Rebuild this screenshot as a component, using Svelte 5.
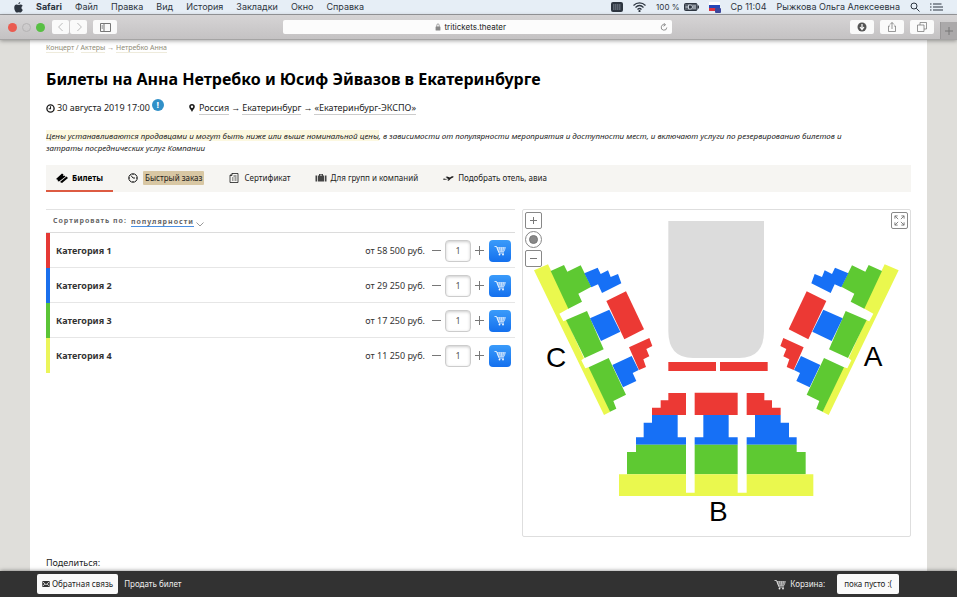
<!-- App.svelte -->
<script>
    const menus = ['Файл', 'Правка', 'Вид', 'История', 'Закладки', 'Окно', 'Справка'];

    const tabs = [
        { id: 'tickets', label: 'Билеты' },
        { id: 'quick', label: 'Быстрый заказ' },
        { id: 'gift', label: 'Сертификат' },
        { id: 'groups', label: 'Для групп и компаний' },
        { id: 'travel', label: 'Подобрать отель, авиа' }
    ];

    let activeTab = $state('tickets');
    let sort = $state('популярности');

    let categories = $state([
        { name: 'Категория 1', price: '58 500', color: 'red', count: 1 },
        { name: 'Категория 2', price: '29 250', color: 'blue', count: 1 },
        { name: 'Категория 3', price: '17 250', color: 'green', count: 1 },
        { name: 'Категория 4', price: '11 250', color: 'yellow', count: 1 }
    ]);

    // side block, drawn as C and mirrored for A
    const sideBlock = [
        ['yellow', '42,196 84,178 147,310 118,326 130,349 140,345 192,460 184,466 196,490 208,486 271,620 252,630'],
        ['green', '92,198 132,180 142,200 182,181 214,245 175,266 186,290 145,311'],
        ['blue', '193,205 233,188 242,207 264,196 272,216 294,207 304,235 246,264 234,238 214,247'],
        ['green', '138,345 201,318 251,433 194,459'],
        ['blue', '210,340 268,314 301,380 243,408'],
        ['red', '259,288 318,259 372,373 313,403'],
        ['red', '327,427 388,399 397,423 379,432 388,454 370,463 378,486 357,495'],
        ['blue', '277,480 335,453 356,495 338,504 349,528 309,547'],
        ['green', '206,487 266,459 318,569 280,588 289,611 270,620']
    ];

    // outer part of block B, mirrored for its right side
    const wingBlock = [
        ['red', '445,564 498,564 498,630 396,630 396,608 422,608 422,586 445,586'],
        ['blue', '396,630 473,630 473,697 498,697 498,719 348,719 348,697 371,697 371,653 396,653'],
        ['green', '348,719 498,719 498,808 321,808 321,741 348,741']
    ];

    const middleBlock = [
        ['red', '524,563 653,563 653,630 524,630'],
        ['blue', '550,630 626,630 626,697 653,697 653,719 524,719 524,697 550,697'],
        ['green', '524,719 653,719 653,808 524,808'],
        ['yellow', '297,808 498,808 498,863 524,863 524,808 653,808 653,863 680,863 680,808 880,808 880,873 297,873']
    ];

    function change(category, step) {
        category.count = Math.max(1, category.count + step);
    }
</script>

{#snippet cart()}
    <svg class="cart" viewBox="0 0 24 22" aria-hidden="true">
        <path d="M1 3h4l5 13h10" fill="none" stroke="currentColor" stroke-width="1.6" />
        <path d="M6 5h17l-3 8H9z M7 7.5h15 M8 10h13 M11 5l1.5 8 M15 5v8 M19 5l-1.500 8" fill="none" stroke="currentColor" stroke-width="1.1" />
        <circle cx="11" cy="19" r="1.8" fill="currentColor" />
        <circle cx="18" cy="19" r="1.8" fill="currentColor" />
    </svg>
{/snippet}

{#snippet shapes(list)}
    {#each list as [color, points]}
        <polygon class="seat-{color}" {points} />
    {/each}
{/snippet}

<div class="screen">
    <header class="menubar">
        <svg class="apple" viewBox="0 0 18 22" aria-hidden="true">
            <path d="M12.500 0c.2 2-1.500 4.500-3.800 4.600C8.400 2.500 10.500.300 12.500 0z M15 11.500c0-2 1-3.300 2.400-4.200C16.300 5.800 14.800 5.200 13.200 5.200c-1.700 0-2.700.9-4 .9-1.300 0-2.500-.9-4-.9C2.500 5.200.500 7.700.500 11.500c0 4.500 3 9.700 5.400 9.700 1.200 0 1.900-.8 3.500-.8s2.200.8 3.500.8c1.900 0 3.900-3.300 4.700-5.700-1.600-.7-2.600-2.200-2.600-4z" fill="currentColor" />
        </svg>
        <b>Safari</b>
        {#each menus as menu}
            <span>{menu}</span>
        {/each}
        <div class="status">
            <svg class="keys" viewBox="0 0 12 10" aria-hidden="true">
                <rect width="12" height="10" rx="2" fill="#2d3540" />
                <path d="M2 3h8M2 5h8M2 7h8" stroke="#8d97a3" stroke-width="1" stroke-dasharray="1.500 .5" />
            </svg>
            <svg class="wifi" viewBox="0 0 26 20" fill="none" stroke="currentColor" stroke-width="2.400" aria-hidden="true">
                <path d="M1 7c7-7 17-7 24 0M5 11c5-5 11-5 16 0M9 15c2.500-2.500 5.500-2.500 8 0" />
                <circle cx="13" cy="18" r="1" fill="currentColor" />
            </svg>
            <span class="percent">100 %</span>
            <svg class="battery" viewBox="0 0 30 16" aria-hidden="true">
                <rect x="1" y="1" width="25" height="14" rx="2" fill="#59616b" stroke="#2d3540" stroke-width="2" />
                <rect x="27" y="5" width="3" height="6" fill="#2d3540" />
                <path d="M3 8h6M9 4v8h4c5 0 5-8 0-8zM17 6h7M17 10h7" fill="#2d3540" stroke="#e6eef6" stroke-width="1.600" />
            </svg>
            <svg class="flag" viewBox="0 0 12 11" aria-hidden="true">
                <rect width="11" height="9" fill="#fff" />
                <rect y="3" width="11" height="3" fill="#2748b8" />
                <rect y="6" width="11" height="3" fill="#dc3340" />
                <rect x="6" y="6" width="6" height="5" rx="1" fill="#3d479c" />
            </svg>
            <span>Ср 11:04</span>
            <span>Рыжкова Ольга Алексеевна</span>
            <svg class="small" viewBox="0 0 20 20" fill="none" stroke="currentColor" stroke-width="2" aria-hidden="true">
                <circle cx="8" cy="8" r="6" /><path d="M12.500 12.500L19 19" />
            </svg>
            <svg class="list" viewBox="0 0 26 16" stroke="currentColor" stroke-width="2.400" aria-hidden="true">
                <path d="M0 2h3M0 8h3M0 14h3M6 2h17M6 8h20M6 14h20" />
            </svg>
        </div>
    </header>

    <div class="toolbar">
        <div class="lights"><i class="close"></i><i class="min"></i><i class="max"></i></div>
        <div class="pair">
            <button aria-label="Назад"><svg viewBox="0 0 10 10"><path d="M7 0L2 5l5 5" /></svg></button>
            <button aria-label="Вперёд"><svg viewBox="0 0 10 10"><path d="M3 0l5 5-5 5" /></svg></button>
        </div>
        <button class="tool side" aria-label="Боковое меню">
            <svg viewBox="0 0 11 9"><path d="M.5.5h10v8H.5zM4 .5v8M1.500 3h1.500M1.500 5h1.500" /></svg>
        </button>
        <div class="address">
            <svg class="lock" viewBox="0 0 10 12" aria-hidden="true">
                <rect x="1" y="5" width="8" height="7" rx="1" fill="#888" />
                <path d="M3 6V3c0-3 4-3 4 0v3" fill="none" stroke="#888" stroke-width="1.300" />
            </svg>
            <input aria-label="Адрес" value="tritickets.theater" />
            <button class="reload" aria-label="Обновить">
                <svg viewBox="0 0 20 22"><path d="M12 4a7 7 0 1 0 5 7M9 0l5 4-5 4" /></svg>
            </button>
        </div>
        <div class="tools">
            <button class="tool" aria-label="Загрузки">
                <svg viewBox="0 0 20 20"><circle cx="10" cy="10" r="9" fill="#555" stroke="none" /><path d="M10 4v9M6 10l4 5 4-5" stroke="#fff" stroke-width="2.400" /></svg>
            </button>
            <button class="tool" aria-label="Поделиться">
                <svg viewBox="0 0 20 20"><path d="M6 8H3v11h14V8h-3M10 14V1M6 5l4-4 4 4" stroke-width="1.500" /></svg>
            </button>
            <button class="tool" aria-label="Вкладки">
                <svg viewBox="0 0 20 20"><path d="M1 6h13v13H1zM6 6V1h13v13h-5" stroke-width="1.500" /></svg>
            </button>
            <button class="newtab" aria-label="Новая вкладка"><svg viewBox="0 0 10 10"><path d="M5 1v8M1 5h8" /></svg></button>
        </div>
    </div>

    <div class="viewport">
        <main>
            <nav class="crumbs">
                <a href="#concert">Концерт</a> / <a href="#actors">Актеры</a> → <a href="#netrebko">Нетребко Анна</a>
            </nav>
            <h1>Билеты на Анна Нетребко и Юсиф Эйвазов в Екатеринбурге</h1>

            <div class="info">
                <div class="date">
                    <svg class="icon" viewBox="0 0 20 20" fill="none" stroke="currentColor" stroke-width="3" aria-hidden="true">
                        <circle cx="10" cy="10" r="8" /><path d="M10 5v5.500H6" stroke-width="2.400" />
                    </svg>
                    <span>30 августа 2019 17:00</span>
                    <span class="badge">!</span>
                </div>
                <div class="place">
                    <svg class="pin" viewBox="0 0 14 20" aria-hidden="true">
                        <path d="M7 0a7 7 0 0 1 7 7c0 4-4 7-7 13C4 14 0 11 0 7a7 7 0 0 1 7-7zm0 4a3 3 0 1 0 0 6 3 3 0 0 0 0-6z" fill="currentColor" fill-rule="evenodd" />
                    </svg>
                    <a href="#russia">Россия</a> → <a href="#city">Екатеринбург</a> → <a href="#expo">«Екатеринбург-ЭКСПО»</a>
                </div>
            </div>

            <p class="note"><mark>Цены устанавливаются продавцами и могут быть ниже или выше номинальной цены</mark>, в зависимости от популярности мероприятия и доступности мест, и включают услуги по резервированию билетов и затраты посреднических услуг Компании</p>

            <nav class="tabs">
                {#each tabs as tab}
                    <a href="#{tab.id}" class={tab.id} class:active={activeTab === tab.id} onclick={() => (activeTab = tab.id)}>
                        {#if tab.id === 'tickets'}
                            <svg viewBox="0 0 24 20"><path d="M0 12L12 1l3 2-1 2 2 1 1-1 2 2L6 17l-3-1 1-2-2-1zM8 18L21 7l3 3-12 10z" fill="currentColor" /></svg>
                        {:else if tab.id === 'quick'}
                            <svg viewBox="0 0 20 20" fill="none" stroke="currentColor" stroke-width="2"><circle cx="10" cy="10" r="8.500" /><path d="M6 5l4 5h4M10 2v2M10 16v2M2 10h2M16 10h2" /></svg>
                        {:else if tab.id === 'gift'}
                            <svg viewBox="0 0 20 20" fill="none" stroke="currentColor" stroke-width="1.600"><path d="M6 1h12v18H2V5zM6 1v4H2M9 6h6M6 10h3M11 10h4M6 14h3M11 14h4" /></svg>
                        {:else if tab.id === 'groups'}
                            <svg viewBox="0 0 24 20" fill="#444"><path d="M1 5h3v12H1zM5.500 5H8V2h8v3h2.500v12h-13zM20 5h3v12h-3zM10 3.500V5h4V3.500z" fill-rule="evenodd" /></svg>
                        {:else}
                            <svg viewBox="0 0 24 20" fill="currentColor"><path d="M2 12l2-1 4 1 4-1-5-3 3-1 6 2c3-3 6-3 7-2s-2 3-5 4l-4 4-3 1 2-4-5 1c-3 1-5 1-6-1z" /></svg>
                        {/if}
                        <span>{tab.label}</span>
                    </a>
                {/each}
            </nav>

            <div class="columns">
                <section class="offers">
                    <div class="sort">
                        <label for="sort">Сортировать по:</label>
                        <select id="sort" bind:value={sort}>
                            <option>популярности</option>
                            <option>цене</option>
                        </select>
                        <svg viewBox="0 0 8 5" aria-hidden="true"><path d="M.5.5L4 4 7.500.5" fill="none" stroke="#999" /></svg>
                    </div>
                    {#each categories as category}
                        <div class="row {category.color}">
                            <b>{category.name}</b>
                            <span class="price">от {category.price} руб.</span>
                            <button class="step" aria-label="Меньше" onclick={() => change(category, -1)}>
                                <svg viewBox="0 0 9 9"><path d="M0 4.500h9" /></svg>
                            </button>
                            <input aria-label="Количество, {category.name}" bind:value={category.count} />
                            <button class="step" aria-label="Больше" onclick={() => change(category, 1)}>
                                <svg viewBox="0 0 9 9"><path d="M0 4.500h9M4.500 0v9" /></svg>
                            </button>
                            <button class="buy" aria-label="В корзину">{@render cart()}</button>
                        </div>
                    {/each}
                </section>

                <section class="map">
                    <svg class="hall" viewBox="9 15 1161 978">
                        <path d="M445 48h287v330q0 81-74 81H519q-74 0-74-81z" fill="#dcdcdc" />
                        <rect class="seat-red" x="445" y="471" width="143" height="27" />
                        <rect class="seat-red" x="600" y="471" width="143" height="27" />
                        {@render shapes(sideBlock)}
                        <g transform="translate(1178 0) scale(-1 1)">{@render shapes(sideBlock)}</g>
                        {@render shapes(wingBlock)}
                        <g transform="translate(1178 0) scale(-1 1)">{@render shapes(wingBlock)}</g>
                        {@render shapes(middleBlock)}
                        <text x="108" y="487">C</text>
                        <text x="1059" y="484">A</text>
                        <text x="595" y="948">B</text>
                    </svg>
                    <div class="zoom">
                        <button aria-label="Приблизить"><svg viewBox="0 0 9 9"><path d="M1 4.500h7M4.500 1v7" /></svg></button>
                        <button class="round" aria-label="Сбросить"><svg viewBox="0 0 9 9"><circle cx="4.500" cy="4.500" r="4" /></svg></button>
                        <button aria-label="Отдалить"><svg viewBox="0 0 9 9"><path d="M1 4.500h7" /></svg></button>
                    </div>
                    <button class="full" aria-label="На весь экран">
                        <svg viewBox="0 0 24 24"><path d="M9 9L2 2M2 8V2h6M15 9l7-7M16 2h6v6M9 15l-7 7M2 16v6h6M15 15l7 7M22 16v6h-6" /></svg>
                    </button>
                </section>
            </div>

            <div class="share">Поделиться:</div>
        </main>
    </div>

    <footer>
        <button class="light feedback">
            <svg class="mail" viewBox="0 0 20 16" aria-hidden="true">
                <rect width="20" height="16" fill="#333" /><path d="M1 2l9 8 9-8M1 14l6-6M19 14l-6-6" fill="none" stroke="#fff" stroke-width="2" />
            </svg>
            Обратная связь
        </button>
        <a href="#sell">Продать билет</a>
        <span class="basket">{@render cart()} Корзина:</span>
        <button class="light">пока пусто :(</button>
    </footer>
</div>

<style>
    :global(body) {
        margin: 0;
        background: #dfdeda;
    }

    .screen {
        min-height: 100vh;
        display: flex;
        flex-direction: column;
        font: 9px/12px "Noto Sans", sans-serif;
        color: #1c1c1c;
    }

    svg {
        display: block;
        flex: none;
    }

    button,
    input,
    select {
        font: inherit;
        color: inherit;
        margin: 0;
        padding: 0;
        border: 0;
        background: none;
        box-sizing: border-box;
    }

    button {
        display: flex;
        align-items: center;
        justify-content: center;
    }

    /* system menu */
    .menubar {
        display: flex;
        align-items: center;
        gap: 13px;
        height: 14px;
        padding: 0 14px;
        background: #e6eef6;
        border-bottom: 1px solid #9c9da1;
        font: 9px/14px Inter, sans-serif;
        color: #2d3540;
        white-space: nowrap;
    }

    .apple {
        width: 9px;
        height: 11px;
    }

    .status {
        display: flex;
        align-items: center;
        gap: 10px;
        margin-left: auto;
    }

    .keys {
        width: 12px;
        height: 10px;
    }

    .wifi {
        width: 13px;
        height: 10px;
    }

    .percent {
        font-size: 8px;
    }

    .battery {
        width: 15px;
        height: 8px;
        margin-left: -6px;
    }

    .flag {
        width: 12px;
        height: 11px;
    }

    .small {
        width: 10px;
        height: 10px;
    }

    .list {
        width: 13px;
        height: 8px;
    }

    /* browser toolbar */
    .toolbar {
        display: flex;
        align-items: center;
        height: 24px;
        padding-left: 8px;
        background: linear-gradient(#d6d4d5, #c4c2c3);
        border-bottom: 1px solid #a5a4a4;
        box-shadow: 0 1px 4px rgba(0, 0, 0, 0.35);
        position: relative;
        z-index: 1;
        font-family: Inter, sans-serif;
    }

    .toolbar svg {
        fill: none;
        stroke: #777;
    }

    .lights {
        display: flex;
        gap: 5px;
    }

    .lights i {
        width: 9px;
        height: 9px;
        border-radius: 50%;
        box-sizing: border-box;
    }

    .close {
        background: #ea5b50;
    }

    .min {
        border: 1px solid #b5b3b4;
    }

    .max {
        background: #57bf43;
    }

    .pair {
        display: flex;
        gap: 1px;
        margin: 0 6px 0 7px;
    }

    .pair button {
        width: 17px;
        height: 14px;
        background: #fafafa;
        border-radius: 2px;
    }

    .pair svg {
        width: 8px;
        height: 8px;
        stroke: #aaa;
    }

    .tool {
        width: 24px;
        height: 14px;
        background: #fafafa;
        border-radius: 2px;
    }

    .tool svg {
        width: 10px;
        height: 10px;
    }

    .side svg {
        width: 11px;
        height: 9px;
    }

    .address {
        display: flex;
        align-items: center;
        gap: 3px;
        width: 41%;
        height: 14px;
        margin: 0 12px 0 auto;
        padding: 0 4px;
        background: #fcfcfc;
        border-radius: 2px;
        box-sizing: border-box;
    }

    .lock {
        width: 6px;
        height: 8px;
        margin-left: auto;
    }

    .toolbar .lock {
        stroke: none;
    }

    .address input {
        width: 64px;
        height: 12px;
        font-size: 8px;
        color: #222;
    }

    .reload {
        margin-left: auto;
    }

    .reload svg {
        width: 8px;
        height: 9px;
        stroke-width: 2;
    }

    .tools {
        display: flex;
        align-items: center;
        gap: 6px;
        align-self: stretch;
        margin-left: auto;
    }

    .newtab {
        width: 17px;
        height: 17px;
        align-self: flex-end;
        background: #aba9aa;
        border-left: 1px solid #9a9899;
    }

    .newtab svg {
        width: 10px;
        height: 10px;
    }

    /* page */
    .viewport {
        flex: 1;
        display: flex;
        padding: 0 30px;
    }

    main {
        flex: 1;
        min-width: 0;
        padding: 2px 16px;
        background: #fff;
    }

    main a {
        color: inherit;
        text-decoration: none;
    }

    .crumbs {
        font-size: 7px;
        color: #8f8c78;
    }

    .crumbs a {
        border-bottom: 1px solid #eeebdc;
    }

    h1 {
        margin: 13px 0 9px;
        font: bold 16px/24px "Noto Sans", sans-serif;
        color: #000;
    }

    .info {
        display: flex;
        align-items: center;
        gap: 25px;
        height: 16px;
    }

    .date,
    .place {
        display: flex;
        align-items: center;
        gap: 2px;
    }

    .icon {
        width: 9px;
        height: 9px;
    }

    .pin {
        width: 6px;
        height: 8px;
        margin-right: 2px;
    }

    .place a {
        border-bottom: 1px solid #ccc;
    }

    .badge {
        width: 12px;
        height: 12px;
        margin-bottom: 6px;
        border-radius: 50%;
        background: #3190c8;
        color: #fff;
        font-weight: bold;
        text-align: center;
    }

    .note {
        margin: 14px 0 11px;
        padding-right: 32px;
        font-size: 8px;
        font-style: italic;
    }

    mark {
        background: #fcf8e0;
        color: inherit;
    }

    .tabs {
        display: flex;
        gap: 4px;
        height: 27px;
        background: #f6f5f2;
        font-size: 8px;
        white-space: nowrap;
    }

    .tabs a {
        display: flex;
        align-items: center;
        gap: 4px;
        padding: 0 10px;
        border-bottom: 2px solid transparent;
    }

    .tabs .active {
        border-color: #dd5b42;
        font-weight: bold;
        color: #000;
    }

    .tabs svg {
        width: 12px;
        height: 10px;
    }

    .quick span {
        padding: 1px 2px;
        background: #d8c7a3;
        border-radius: 1px;
    }

    .columns {
        display: grid;
        grid-template-columns: 469fr 389fr;
        gap: 7px;
        align-items: start;
        margin-top: 17px;
    }

    .sort {
        display: flex;
        align-items: center;
        height: 22px;
        padding-left: 7px;
        border-top: 1px solid #e2e2e2;
        border-bottom: 1px solid #dcdcdc;
        font-size: 7px;
        font-weight: bold;
        letter-spacing: 1px;
        color: #666;
    }

    .sort select {
        appearance: none;
        height: 11px;
        margin-left: 4px;
        letter-spacing: inherit;
        border-bottom: 1px solid #4a8fe0;
        border-radius: 0;
    }

    .sort svg {
        width: 8px;
        height: 5px;
        margin: 6px 0 0 2px;
    }

    .row {
        display: flex;
        align-items: center;
        height: 35px;
        padding: 0 4px 0 6px;
        border-left: 4px solid;
        box-shadow: inset 0 -1px #e6e6e6;
    }

    .row:last-child {
        box-shadow: none;
    }

    .row b {
        flex: 1;
        color: #333;
    }

    .red {
        border-color: #e53935;
    }

    .blue {
        border-color: #1a6fec;
    }

    .green {
        border-color: #5bc436;
    }

    .yellow {
        border-color: #ebf55a;
    }

    .price {
        margin-right: 7px;
        color: #333;
    }

    .step svg {
        width: 9px;
        height: 9px;
        stroke: #777;
        stroke-width: 1;
    }

    .row input {
        width: 26px;
        height: 22px;
        margin: 0 4px;
        border: 1px solid #ccc;
        border-radius: 4px;
        box-shadow: inset 0 1px 3px #ccc;
        text-align: center;
        color: #555;
    }

    .buy {
        width: 22px;
        height: 22px;
        margin-left: 5px;
        border-radius: 4px;
        background: linear-gradient(#3a9bfa, #1470ee);
        color: #fff;
    }

    .cart {
        width: 12px;
        height: 11px;
    }

    /* hall */
    .map {
        position: relative;
        border: 1px solid #dedede;
        border-radius: 2px;
    }

    .hall {
        width: 100%;
    }

    .hall text {
        font: 84px "Liberation Sans", sans-serif;
        text-anchor: middle;
        fill: #000;
    }

    .seat-red {
        fill: #ec3934;
    }

    .seat-blue {
        fill: #1670f6;
    }

    .seat-green {
        fill: #5ec932;
    }

    .seat-yellow {
        fill: #eaf84e;
    }

    .zoom {
        position: absolute;
        top: 2px;
        left: 2px;
        display: grid;
        gap: 2px;
    }

    .zoom button,
    .full {
        width: 17px;
        height: 17px;
        background: #fff;
        border: 1px solid #888;
        border-radius: 2px;
    }

    .zoom .round {
        border-radius: 50%;
    }

    .map button svg {
        width: 9px;
        height: 9px;
        fill: none;
        stroke: #777;
    }

    .round circle {
        fill: #888;
    }

    .full {
        position: absolute;
        top: 2px;
        right: 2px;
    }

    .map .full svg {
        width: 11px;
        height: 11px;
        stroke-width: 2;
    }

    .share {
        margin-top: 20px;
    }

    footer {
        display: flex;
        align-items: center;
        height: 26px;
        padding: 0 58px 0 37px;
        background: #323232;
        box-shadow: 0 0 4px rgba(0, 0, 0, 0.5);
        color: #eee;
        font-size: 8px;
    }

    footer a {
        margin-left: 6px;
        color: inherit;
        text-decoration: none;
    }

    .light {
        gap: 2px;
        height: 20px;
        padding: 0 7px;
        background: #fafafa;
        border-radius: 2px;
        color: #222;
    }

    .feedback {
        padding: 0 5px;
    }

    .mail {
        width: 8px;
        height: 6px;
    }

    .basket {
        display: flex;
        align-items: center;
        gap: 4px;
        margin: 0 12px 0 auto;
    }
</style>
